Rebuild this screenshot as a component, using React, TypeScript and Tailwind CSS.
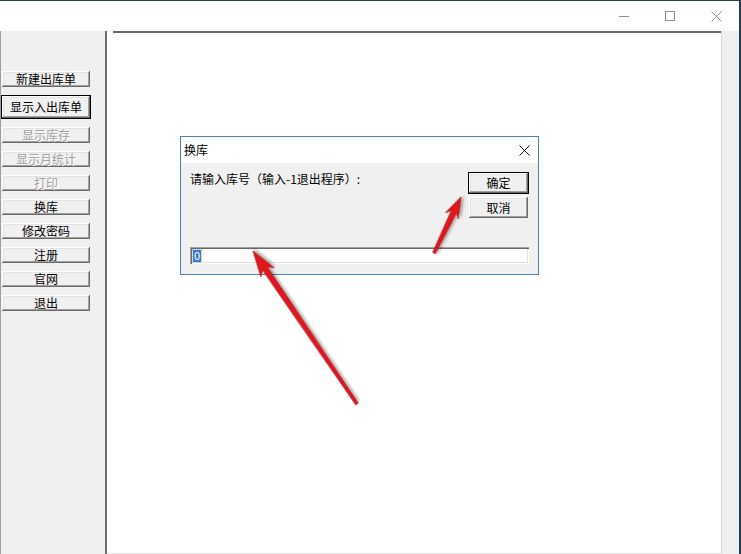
import React from "react";

const cjk = "font-['Noto_Sans_CJK_SC','Noto_Sans',sans-serif]";

const raised =
  "shadow-[inset_-1px_-1px_0_#696969,inset_1px_1px_0_#ffffff,inset_-2px_-2px_0_#a0a0a0,inset_2px_2px_0_#e3e3e3]";

type BtnProps = {
  label: string;
  primary?: boolean;
  disabled?: boolean;
  className?: string;
};

function WinButton({ label, primary, disabled, className = "" }: BtnProps) {
  return (
    <div
      className={`flex items-center justify-center bg-[#f0f0f0] text-[12px] leading-none ${raised} ${
        primary ? "border border-black" : ""
      } ${disabled ? "text-[#a0a0a0] [text-shadow:1px_1px_0_#ffffff]" : "text-black"} ${className}`}
    >
      {label}
    </div>
  );
}

const sideButtons: { label: string; primary?: boolean; disabled?: boolean }[] = [
  { label: "新建出库单" },
  { label: "显示入出库单", primary: true },
  { label: "显示库存", disabled: true },
  { label: "显示月统计", disabled: true },
  { label: "打印", disabled: true },
  { label: "换库" },
  { label: "修改密码" },
  { label: "注册" },
  { label: "官网" },
  { label: "退出" },
];

function Arrow({
  from,
  to,
  head = 24,
  wing = 8,
}: {
  from: [number, number];
  to: [number, number];
  head?: number;
  wing?: number;
}) {
  const dx = to[0] - from[0];
  const dy = to[1] - from[1];
  const len = Math.hypot(dx, dy);
  const ang = (Math.atan2(dy, dx) * 180) / Math.PI;
  const pts = [
    [0, 0],
    [-head, -wing],
    [-head + 5, -2.8],
    [-len, -1.4],
    [-len, 1.4],
    [-head + 5, 2.8],
    [-head, wing],
  ]
    .map((p) => p.join(","))
    .join(" ");
  return (
    <g transform={`translate(${to[0]} ${to[1]}) rotate(${ang})`} filter="url(#arrowShadow)">
      <polygon points={pts} fill="#e2181d" stroke="#a90c11" strokeWidth={0.7} strokeLinejoin="round" />
    </g>
  );
}

function CaptionButtons() {
  return (
    <div className="flex h-full">
      <div className="flex w-[46px] items-center justify-center">
        <svg width="10" height="10" viewBox="0 0 10 10">
          <path d="M0 5.5h10" stroke="#8f8f8f" strokeWidth="1" />
        </svg>
      </div>
      <div className="flex w-[46px] items-center justify-center">
        <svg width="10" height="10" viewBox="0 0 10 10">
          <rect x="0.5" y="0.5" width="9" height="9" fill="none" stroke="#8f8f8f" strokeWidth="1" />
        </svg>
      </div>
      <div className="flex w-[46px] items-center justify-center">
        <svg width="11" height="11" viewBox="0 0 11 11">
          <path d="M0.5 0.5l10 10M10.5 0.5l-10 10" stroke="#8f8f8f" strokeWidth="1" />
        </svg>
      </div>
    </div>
  );
}

function SwitchDialog() {
  return (
    <div className={`absolute left-[180px] top-[135px] flex h-[139px] w-[359px] flex-col border border-[#4b83b5] bg-[#f0f0f0] ${cjk}`}>
      <div className="flex h-[26px] items-center justify-between bg-white pl-[3px] pr-[8px]">
        <span className="text-[12px] leading-none text-black">换库</span>
        <svg width="11" height="11" viewBox="0 0 11 11">
          <path d="M0.5 0.5l10 10M10.5 0.5l-10 10" stroke="#111" strokeWidth="1" />
        </svg>
      </div>
      <div className="flex flex-1 flex-col px-[9px] pt-[9px]">
        <div className="flex items-start justify-between">
          <span className="mt-[1px] text-[12px] leading-[12px] text-black">请输入库号（输入-1退出程序）:</span>
          <div className="flex flex-col items-start gap-[3px]">
            <WinButton label="确定" primary className="h-[22px] w-[61px]" />
            <WinButton label="取消" className="ml-[1px] h-[21px] w-[59px]" />
          </div>
        </div>
        <div className="mt-[29px] flex h-[17px] items-center bg-white pl-[3px] shadow-[inset_1px_1px_0_#a0a0a0,inset_2px_2px_0_#696969,inset_-1px_-1px_0_#ffffff,inset_-2px_-2px_0_#e3e3e3]">
          <span className="flex h-[12px] w-[8px] items-center justify-center bg-[#3a79c8] text-[11px] leading-none text-white outline-1 outline-dotted outline-[#9cc3f0]">
            0
          </span>
        </div>
      </div>
    </div>
  );
}

export default function App() {
  return (
    <div className={`relative flex h-[554px] w-[741px] flex-col overflow-hidden border-r-2 border-t border-r-[#1d3b5c] border-t-[#2d3e50] bg-white ${cjk}`}>
      <div className="flex h-[30px] justify-end bg-white">
        <CaptionButtons />
      </div>

      <div className="flex flex-1">
        <div className="flex w-[107px] flex-col gap-2 border-l border-r-2 border-l-[#a0a0a0] border-r-[#6e6e6e] bg-[#f0f0f0] pl-[1px] pt-[40px]">
          {sideButtons.map((b) =>
            b.primary ? (
              <WinButton key={b.label} label={b.label} primary className="-ml-[1px] h-[24px] w-[90px]" />
            ) : (
              <WinButton key={b.label} label={b.label} disabled={b.disabled} className="h-[16px] w-[88px]" />
            )
          )}
        </div>

        <div className="flex w-[615px] flex-col border-b border-r border-b-[#e6e6e6] border-r-[#dadada] bg-white">
          <div className="ml-[6px] h-[2px] bg-[#6a6a6a]" />
        </div>

        <div className="flex-1 bg-[#f0f0f0]" />
      </div>

      <SwitchDialog />

      <svg className="pointer-events-none absolute left-0 top-0" width="741" height="554">
        <defs>
          <filter id="arrowShadow" x="-20%" y="-20%" width="140%" height="140%">
            <feDropShadow dx="1.5" dy="2" stdDeviation="1.5" floodColor="#000" floodOpacity="0.35" />
          </filter>
        </defs>
        <Arrow from={[357, 403]} to={[253, 250]} head={26} wing={8} />
        <Arrow from={[434, 252]} to={[461, 196]} head={21} wing={7} />
      </svg>
    </div>
  );
}
